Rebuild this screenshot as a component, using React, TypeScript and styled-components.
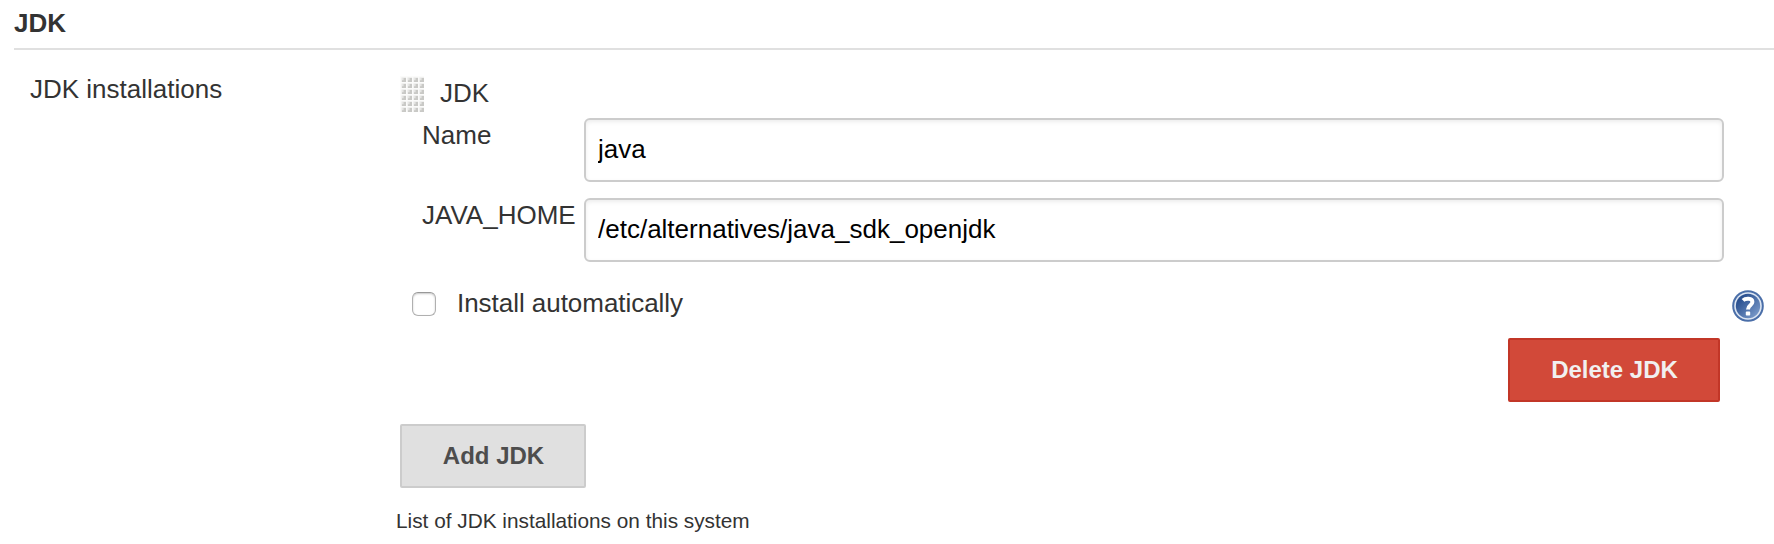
import React from 'react';
import styled, { createGlobalStyle } from 'styled-components';

const GlobalStyle = createGlobalStyle`
  *, *::before, *::after { box-sizing: border-box; }
  body {
    margin: 0;
    background: #fff;
    color: #333;
    font: 26px/30px Helvetica, "Liberation Sans", Arial, sans-serif;
    overflow: hidden;
  }
`;

const Page = styled.main`
  height: 544px;
  padding: 8px 0 0 14px;
`;

const SectionTitle = styled.h2`
  margin: 0;
  padding-bottom: 10px;
  border-bottom: 2px solid #e0e0e0;
  font-size: 26px;
  font-weight: bold;
  line-height: 30px;
`;

const Section = styled.section`
  display: flex;
  align-items: flex-start;
`;

const SectionLabel = styled.div`
  width: 382px;
  padding: 24px 0 0 16px;
`;

const Content = styled.div`
  flex: 1;
  display: flex;
  flex-direction: column;
  padding: 26px 10px 0 4px;
`;

const ItemHeader = styled.div`
  display: flex;
  align-items: flex-start;
  height: 36px;
  margin-bottom: 6px;
`;

const Grip = styled.svg`
  width: 24px;
  height: 36px;
  margin-right: 16px;
`;

const Caption = styled.span<{ $tracking?: number }>`
  padding-top: 2px;
  letter-spacing: ${(p) => p.$tracking ?? 0}px;
  white-space: nowrap;
`;

const Field = styled.label`
  display: flex;
  align-items: flex-start;
  margin: 0 40px 16px 22px;
`;

const FieldName = styled(Caption)`
  width: 162px;
`;

const TextInput = styled.input`
  flex: 1;
  min-width: 0;
  height: 64px;
  padding: 0 12px 2px;
  border: 2px solid #ccc;
  border-radius: 6px;
  outline: 0;
  background: #fff;
  box-shadow: inset 0 2px 4px rgba(0, 0, 0, 0.075);
  color: #000;
  font: inherit;
`;

const OptionRow = styled.div`
  display: flex;
  align-items: flex-start;
  justify-content: space-between;
  height: 32px;
  margin: 12px 0 16px 12px;
`;

const Option = styled.label`
  display: flex;
  align-items: flex-start;
  margin-top: -4px;
`;

const Checkbox = styled.input`
  appearance: none;
  width: 24px;
  height: 24px;
  margin: 6px 21px 0 0;
  border: 1px solid #b0b0b0;
  border-top-color: #989898;
  border-radius: 6px;
  background: #fff;
  box-shadow: inset 0 1px 2px rgba(0, 0, 0, 0.22);
`;

const HelpIcon = styled.svg`
  width: 32px;
  height: 32px;
`;

const Button = styled.button<{ $danger?: boolean }>`
  align-self: ${(p) => (p.$danger ? 'flex-end' : 'flex-start')};
  width: ${(p) => (p.$danger ? 212 : 186)}px;
  height: 64px;
  margin: ${(p) => (p.$danger ? '0 44px 22px 0' : '0 0 20px')};
  padding: 0 0 0 1px;
  border: 2px solid ${(p) => (p.$danger ? '#c23627' : '#ccc')};
  border-radius: 2px;
  background: ${(p) => (p.$danger ? '#d24939' : '#e0e0e0')};
  color: ${(p) => (p.$danger ? '#f1f0f0' : '#4d4d4d')};
  font: bold 24px/60px Helvetica, "Liberation Sans", Arial, sans-serif;
`;

const Description = styled.div`
  margin-left: -4px;
  font-size: 20.8px;
  line-height: 26px;
`;

function DragHandle() {
  return (
    <Grip viewBox="0 0 24 36" aria-hidden="true">
      <defs>
        <pattern id="grip" width="6" height="6" patternUnits="userSpaceOnUse">
          <rect width="6" height="6" fill="#fbfbfa" />
          <rect x="1.5" y="1.5" width="4.5" height="4.5" fill="#e6e6e4" />
          <path d="M6 2v4H2V4.3h1.6V2z" fill="#c9c9c6" />
        </pattern>
      </defs>
      <rect width="24" height="36" fill="url(#grip)" />
    </Grip>
  );
}

function Help() {
  return (
    <HelpIcon viewBox="0 0 32 32" role="img" aria-label="Help">
      <defs>
        <linearGradient id="help" x1="0" y1="0" x2="1" y2="1">
          <stop offset="0.2" stopColor="#2a5090" />
          <stop offset="1" stopColor="#86a5d2" />
        </linearGradient>
      </defs>
      <circle cx="16" cy="16" r="15.8" fill="#4a6ea8" />
      <circle cx="16" cy="16" r="13.8" fill="#dce5f2" />
      <circle cx="16" cy="16" r="12.2" fill="url(#help)" />
      <path
        d="M11 10.4c2.4-2.2 9.4-2.6 9.4 1.6 0 3.4-4.4 3.2-4.4 7.4"
        fill="none"
        stroke="#fff"
        strokeWidth="4"
      />
      <rect x="13.8" y="21.6" width="4.4" height="4" rx="0.8" fill="#fff" />
    </HelpIcon>
  );
}

export default function App() {
  return (
    <>
      <GlobalStyle />
      <Page>
        <SectionTitle>JDK</SectionTitle>
        <Section>
          <SectionLabel>JDK installations</SectionLabel>
          <Content>
            <ItemHeader>
              <DragHandle />
              <Caption>JDK</Caption>
            </ItemHeader>
            <Field>
              <FieldName>Name</FieldName>
              <TextInput defaultValue="java" />
            </Field>
            <Field>
              <FieldName>JAVA_HOME</FieldName>
              <TextInput defaultValue="/etc/alternatives/java_sdk_openjdk" spellCheck={false} />
            </Field>
            <OptionRow>
              <Option>
                <Checkbox type="checkbox" />
                <Caption $tracking={-0.04}>Install automatically</Caption>
              </Option>
              <Help />
            </OptionRow>
            <Button $danger>Delete JDK</Button>
            <Button>Add JDK</Button>
            <Description>List of JDK installations on this system</Description>
          </Content>
        </Section>
      </Page>
    </>
  );
}
